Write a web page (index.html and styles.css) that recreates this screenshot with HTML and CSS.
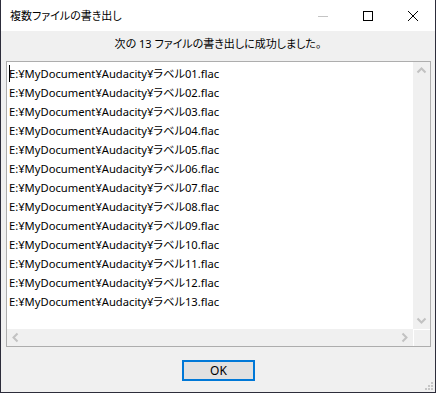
FILE: index.html
```html
<!DOCTYPE html>
<html lang="ja">
    <head>
        <title>複数ファイルの書き出し</title>
        <link rel="stylesheet" href="styles.css">
    </head>
    <body>
        <div class="window">
            <div class="titlebar">
                <div class="title">複数ファイルの書き出し</div>
                <div class="controls">
                    <div class="ctl">
                        <svg width="10" height="10" viewBox="0 0 10 10"><path d="M0 5.5h10" stroke="#c4c4c4" stroke-width="1"/></svg>
                    </div>
                    <div class="ctl">
                        <svg width="10" height="10" viewBox="0 0 10 10"><rect x="0.5" y="0.5" width="9" height="9" fill="none" stroke="#000" stroke-width="1"/></svg>
                    </div>
                    <div class="ctl">
                        <svg width="10" height="10" viewBox="0 0 10 10"><path d="M0 0L10 10M10 0L0 10" stroke="#000" stroke-width="1"/></svg>
                    </div>
                </div>
            </div>

            <div class="content">
                <div class="message">次の 13 ファイルの書き出しに成功しました。</div>

                <div class="listbox">
                    <div class="lines">
                        <div class="line"><span class="caret"></span>E:¥MyDocument¥Audacity¥ラベル01.flac</div>
                        <div class="line">E:¥MyDocument¥Audacity¥ラベル02.flac</div>
                        <div class="line">E:¥MyDocument¥Audacity¥ラベル03.flac</div>
                        <div class="line">E:¥MyDocument¥Audacity¥ラベル04.flac</div>
                        <div class="line">E:¥MyDocument¥Audacity¥ラベル05.flac</div>
                        <div class="line">E:¥MyDocument¥Audacity¥ラベル06.flac</div>
                        <div class="line">E:¥MyDocument¥Audacity¥ラベル07.flac</div>
                        <div class="line">E:¥MyDocument¥Audacity¥ラベル08.flac</div>
                        <div class="line">E:¥MyDocument¥Audacity¥ラベル09.flac</div>
                        <div class="line">E:¥MyDocument¥Audacity¥ラベル10.flac</div>
                        <div class="line">E:¥MyDocument¥Audacity¥ラベル11.flac</div>
                        <div class="line">E:¥MyDocument¥Audacity¥ラベル12.flac</div>
                        <div class="line">E:¥MyDocument¥Audacity¥ラベル13.flac</div>
                    </div>

                    <div class="vscroll">
                        <svg width="17" height="17" viewBox="0 0 17 17"><path d="M4.5 10.5L8.5 6.5L12.5 10.5" fill="none" stroke="#c2c2c2" stroke-width="2"/></svg>
                        <svg width="17" height="17" viewBox="0 0 17 17"><path d="M4.5 6.5L8.5 10.5L12.5 6.5" fill="none" stroke="#c2c2c2" stroke-width="2"/></svg>
                    </div>

                    <div class="hscroll">
                        <svg width="17" height="17" viewBox="0 0 17 17"><path d="M10.5 4.5L6.5 8.5L10.5 12.5" fill="none" stroke="#c2c2c2" stroke-width="2"/></svg>
                        <svg width="17" height="17" viewBox="0 0 17 17"><path d="M6.5 4.5L10.5 8.5L6.5 12.5" fill="none" stroke="#c2c2c2" stroke-width="2"/></svg>
                    </div>

                    <div class="corner"></div>
                </div>

                <div class="footer">
                    <button class="button">OK</button>
                </div>

                <!-- resize grip -->
                <svg class="grip" width="12" height="12" viewBox="0 0 12 12">
                    <rect x="9" y="3" width="2" height="2" fill="#c6c6c6"/>
                    <rect x="6" y="6" width="2" height="2" fill="#c6c6c6"/>
                    <rect x="9" y="6" width="2" height="2" fill="#c6c6c6"/>
                    <rect x="3" y="9" width="2" height="2" fill="#c6c6c6"/>
                    <rect x="6" y="9" width="2" height="2" fill="#c6c6c6"/>
                    <rect x="9" y="9" width="2" height="2" fill="#c6c6c6"/>
                </svg>
            </div>
        </div>
    </body>
</html>
```

FILE: styles.css
```css
html, body{
    margin: 0;
    padding: 0;
}
body{
    font-family: "Noto Sans", "Noto Sans CJK JP", sans-serif;
    font-size: 12px;
    color: #000;
    background: #2d2d3b;
    font-feature-settings: "palt";
}

.window{
    width: 436px;
    height: 393px;
    box-sizing: border-box;
    border: 1px solid #2d2d3b;
    border-top: none;
    display: flex;
    flex-direction: column;
}

.titlebar{
    height: 31px;
    background: #fff;
    display: flex;
    align-items: center;
    justify-content: space-between;
}
.title{
    padding-left: 9px;
    padding-bottom: 1px;
    font-family: "Noto Sans CJK JP", sans-serif;
    font-size: 11px;
    color: #000;
}
.controls{
    display: flex;
    height: 100%;
}
.ctl{
    width: 45px;
    height: 100%;
    display: flex;
    align-items: center;
    justify-content: center;
}

.content{
    position: relative;
    flex: 1;
    background: #f0f0f0;
    display: flex;
    flex-direction: column;
}

.message{
    text-align: center;
    font-size: 11px;
    line-height: 16px;
    margin-top: 5px;
    height: 16px;
    margin-bottom: 9px;
}

.listbox{
    margin: 0 4px 0 5px;
    height: 286px;
    box-sizing: border-box;
    border: 1px solid #adadad;
    background: #fff;
    display: grid;
    grid-template-columns: 1fr 17px;
    grid-template-rows: 1fr 17px;
}
.lines{
    padding: 2px 0 0 2px;
    overflow: hidden;
    font-size: 11.2px;
}
.line{
    height: 19px;
    line-height: 19px;
    white-space: nowrap;
    position: relative;
}
.caret{
    position: absolute;
    left: 0;
    top: 1px;
    width: 1px;
    height: 17px;
    background: #000;
}
.vscroll{
    background: #f0f0f0;
    display: flex;
    flex-direction: column;
    justify-content: space-between;
}
.hscroll{
    background: #f0f0f0;
    display: flex;
    justify-content: space-between;
}
.corner{
    background: #f0f0f0;
    border-left: 1px solid #fff;
    border-top: 1px solid #fff;
}

.footer{
    display: flex;
    justify-content: center;
    padding-top: 13px;
}
.button{
    width: 73px;
    height: 21px;
    box-sizing: border-box;
    border: 2px solid #0078d7;
    background: #e1e1e1;
    font-family: "Noto Sans", sans-serif;
    font-size: 12px;
    color: #000;
    padding: 0;
    margin-left: 1px;
}

.grip{
    position: absolute;
    right: 1px;
    bottom: 1px;
}
```
